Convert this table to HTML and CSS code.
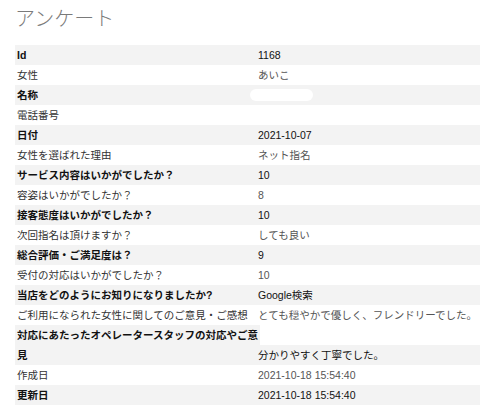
FILE: index.html
```html
<!DOCTYPE html>
<html lang="ja">
<head>
<meta charset="utf-8">
<title>アンケート</title>
<link rel="stylesheet" href="styles.css">
</head>
<body>
<div class="page">
  <h1 class="title">アンケート</h1>
  <div class="list">
    <div class="row odd"><div class="key">Id</div><div class="val">1168</div></div>
    <div class="row"><div class="key">女性</div><div class="val">あいこ</div></div>
    <div class="row odd"><div class="key">名称</div><div class="val"><span class="redact"></span></div></div>
    <div class="row"><div class="key">電話番号</div><div class="val"></div></div>
    <div class="row odd"><div class="key">日付</div><div class="val">2021-10-07</div></div>
    <div class="row"><div class="key">女性を選ばれた理由</div><div class="val">ネット指名</div></div>
    <div class="row odd"><div class="key">サービス内容はいかがでしたか？</div><div class="val">10</div></div>
    <div class="row"><div class="key">容姿はいかがでしたか？</div><div class="val">8</div></div>
    <div class="row odd"><div class="key">接客態度はいかがでしたか？</div><div class="val">10</div></div>
    <div class="row"><div class="key">次回指名は頂けますか？</div><div class="val">しても良い</div></div>
    <div class="row odd"><div class="key">総合評価・ご満足度は？</div><div class="val">9</div></div>
    <div class="row"><div class="key">受付の対応はいかがでしたか？</div><div class="val">10</div></div>
    <div class="row odd"><div class="key">当店をどのようにお知りになりましたか?</div><div class="val">Google検索</div></div>
    <div class="row"><div class="key">ご利用になられた女性に関してのご意見・ご感想</div><div class="val">とても穏やかで優しく、フレンドリーでした。</div></div>
    <div class="row odd split"><div class="key key-wide">対応にあたったオペレータースタッフの対応やご意見</div><div class="val val-low">分かりやすく丁寧でした。</div></div>
    <div class="row"><div class="key">作成日</div><div class="val">2021-10-18 15:54:40</div></div>
    <div class="row odd"><div class="key">更新日</div><div class="val">2021-10-18 15:54:40</div></div>
  </div>
</div>
</body>
</html>
```
FILE: styles.css
```css
html, body {
  margin: 0;
  padding: 0;
  background: #ffffff;
}
.page {
  padding: 6px 0 0 15px;
  font-family: "Liberation Sans", "Noto Sans CJK JP", sans-serif;
}
.title {
  margin: 0 0 15px 0;
  font-family: "Noto Sans CJK JP", sans-serif;
  font-size: 20px;
  line-height: 24px;
  font-weight: 300;
  color: #7a7a7a;
}
.list {
  font-size: 10.5px;
  line-height: 20px;
}
.row {
  display: grid;
  grid-template-columns: 243px 1fr;
  height: 20px;
}
.row .key {
  color: #333333;
}
.row .val {
  color: #555555;
}
.row.odd {
  background: #f3f3f3;
}
.row.odd .key,
.row.odd .val {
  color: #111111;
}
.key {
  padding-left: 2px;
  white-space: nowrap;
}
.row.odd .key {
  font-weight: bold;
}
.val {
  white-space: nowrap;
}
.redact {
  display: inline-block;
  width: 63px;
  height: 12px;
  margin-left: -8px;
  border-radius: 6px;
  background: #ffffff;
  vertical-align: -2px;
}
.row.split {
  height: 40px;
  grid-template-rows: 20px 20px;
  background: linear-gradient(to bottom, #ffffff 20px, #f3f3f3 20px);
}
.key-wide {
  grid-row: 1 / 3;
  grid-column: 1;
  width: 243px;
  white-space: normal;
  background: #f3f3f3;
}
.val-low {
  grid-row: 2;
  grid-column: 2;
}
```
